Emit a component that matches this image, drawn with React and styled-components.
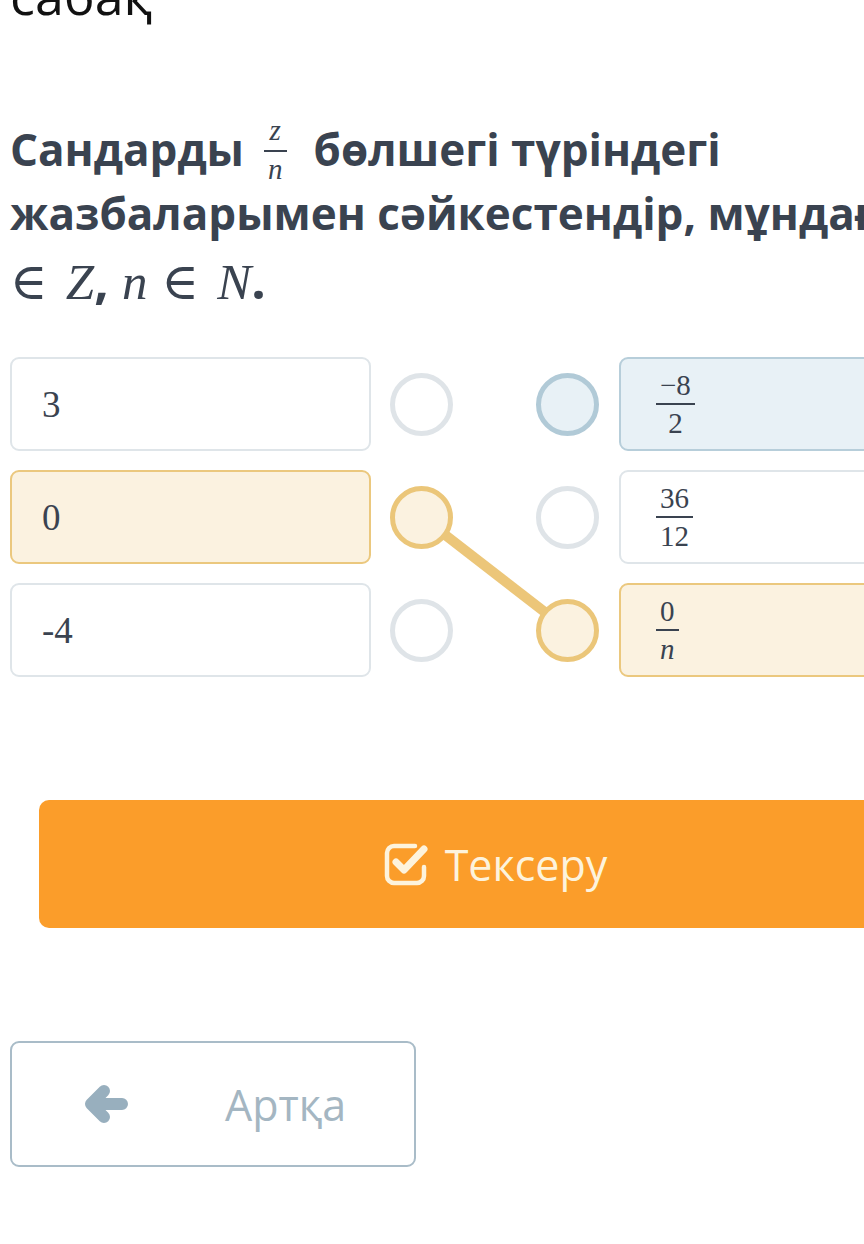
import React from 'react'
import styled, { createGlobalStyle } from 'styled-components'

const GlobalStyle = createGlobalStyle`
  html, body {
    margin: 0;
    padding: 0;
    background: #ffffff;
  }
  body {
    font-family: "Open Sans", "Noto Sans", sans-serif;
    overflow: hidden;
  }
`

const tones = {
  plain: { bg: '#ffffff', border: '#dfe5e9' },
  blue: { bg: '#e8f1f6', border: '#b7ceda' },
  yellow: { bg: '#fbf2e0', border: '#ebc87e' }
}

const Page = styled.div`
  width: 864px;
  height: 1244px;
  overflow: hidden;
`

const Content = styled.div`
  width: 970px;
  padding-left: 10px;
`

const Lesson = styled.div`
  margin-top: -31px;
  font-size: 52px;
  line-height: 52px;
  color: #111111;
  font-weight: 400;
`

const Question = styled.div`
  margin-top: 96px;
  font-size: 44px;
  line-height: 64px;
  font-weight: 700;
  color: #3a4350;
  white-space: nowrap;
`

const MathLine = styled.div`
  font-size: 51px;
  line-height: 63px;
`

const Math = styled.span`
  font-family: "Liberation Serif", "DejaVu Serif", serif;
  font-weight: 400;
  font-style: ${({ italic }) => (italic ? 'italic' : 'normal')};
  margin-right: ${({ space }) => space || 0}px;
`

const Frac = styled.span`
  display: inline-flex;
  flex-direction: column;
  align-items: center;
  vertical-align: ${({ lift }) => lift}px;
  margin: ${({ pull }) => -(pull || 0)}px ${({ right }) => right || 0}px ${({ pull }) => -(pull || 0)}px
    ${({ left }) => left || 0}px;
  font-family: "Liberation Serif", "DejaVu Serif", serif;
  font-weight: 400;
  font-size: ${({ size }) => size}px;
  line-height: ${({ size }) => size}px;
  color: #3a4350;
`

const FracPart = styled.span`
  display: block;
  padding: 0 4px;
  font-style: ${({ italic }) => (italic ? 'italic' : 'normal')};
`

const FracBar = styled.span`
  display: block;
  align-self: stretch;
  height: 2px;
  margin: ${({ top }) => top}px 0 ${({ bottom }) => bottom}px;
  background: #3a4350;
`

const Board = styled.div`
  position: relative;
  margin-top: 43px;
  display: grid;
  grid-template-columns: 361px 19px 63px 83px 63px 20px 361px;
  grid-template-rows: repeat(3, 94px);
  row-gap: 19px;
`

const Card = styled.div`
  grid-column: ${({ col }) => col};
  grid-row: ${({ row }) => row};
  box-sizing: border-box;
  display: flex;
  align-items: center;
  padding-left: ${({ pad }) => pad}px;
  border: 2px solid ${({ tone }) => tones[tone].border};
  background: ${({ tone }) => tones[tone].bg};
  border-radius: 9px;
  font-family: "Liberation Serif", "DejaVu Serif", serif;
  font-size: 37px;
  color: #3a4350;
`

const Dot = styled.div`
  grid-column: ${({ col }) => col};
  grid-row: ${({ row }) => row};
  align-self: center;
  position: relative;
  z-index: 2;
  box-sizing: border-box;
  width: 63px;
  height: 63px;
  border-radius: 50%;
  border: 5px solid ${({ tone }) => (tone === 'plain' ? '#dfe4e8' : tone === 'blue' ? '#b1cad7' : '#ebc679')};
  background: ${({ tone }) => tones[tone].bg};
`

const Link = styled.svg`
  position: absolute;
  left: 0;
  top: 0;
  z-index: 1;
  pointer-events: none;
`

const CheckButton = styled.button`
  margin: 123px 0 0 29px;
  width: 912px;
  height: 128px;
  border: none;
  border-radius: 10px;
  background: #fb9d2a;
  display: flex;
  align-items: center;
  justify-content: center;
  gap: 14px;
  font-family: "Open Sans", sans-serif;
  font-size: 43px;
  color: #fdf3dc;
  padding: 0;
`

const BackButton = styled.button`
  margin-top: 113px;
  width: 406px;
  height: 126px;
  box-sizing: border-box;
  border: 2px solid #a9bcc8;
  border-radius: 9px;
  background: #ffffff;
  display: flex;
  align-items: center;
  padding: 0 0 0 71px;
  gap: 96px;
  font-family: "Open Sans", sans-serif;
  font-size: 43px;
  color: #a4b6c2;
`

const CheckIcon = () => (
  <svg width="48" height="46" viewBox="0 0 48 46" fill="none">
    <path
      d="M32 5 H11 a7 7 0 0 0 -7 7 v23 a7 7 0 0 0 7 7 h23 a7 7 0 0 0 7 -7 v-9"
      stroke="#fdf3dc"
      strokeWidth="4.5"
      strokeLinecap="round"
    />
    <path
      d="M13 21 L21 29 L41 8"
      stroke="#fdf3dc"
      strokeWidth="7"
      strokeLinecap="round"
      strokeLinejoin="round"
    />
  </svg>
)

const ArrowIcon = () => (
  <svg width="46" height="42" viewBox="0 0 46 42" fill="none">
    <path
      d="M39 21 H9 M21 8 L8 21 L21 34"
      stroke="#98afbe"
      strokeWidth="12"
      strokeLinecap="round"
      strokeLinejoin="round"
    />
  </svg>
)

const leftItems = [
  { text: '3', tone: 'plain' },
  { text: '0', tone: 'yellow' },
  { text: '-4', tone: 'plain' }
]

const rightItems = [
  { num: '−8', den: '2', tone: 'blue' },
  { num: '36', den: '12', tone: 'plain' },
  { num: '0', den: 'n', denItalic: true, tone: 'yellow' }
]

const App = () => {
  return (
    <Page>
      <GlobalStyle />
      <Content>
        <Lesson>сабақ</Lesson>
        <Question>
          Сандарды
          <Frac size={29} lift={26} left={20} right={27} pull={20}>
            <FracPart italic>z</FracPart>
            <FracBar top={5} bottom={3} />
            <FracPart italic>n</FracPart>
          </Frac>
          бөлшегі түріндегі
          <br />
          жазбаларымен сәйкестендір, мұндағы <Math italic>z</Math>
          <MathLine>
            <Math space={18}>∈</Math>
            <Math italic>Z</Math>, <Math italic space={14}>n</Math>
            <Math space={18}>∈</Math>
            <Math italic>N</Math>.
          </MathLine>
        </Question>

        <Board>
          <Link width="970" height="320">
            <line x1="412" y1="160" x2="558" y2="273" stroke="#ecc679" strokeWidth="10" />
          </Link>
          {leftItems.map((item, i) => (
            <React.Fragment key={'l' + i}>
              <Card col={1} row={i + 1} tone={item.tone} pad={30}>
                {item.text}
              </Card>
              <Dot col={3} row={i + 1} tone={item.tone} />
            </React.Fragment>
          ))}
          {rightItems.map((item, i) => (
            <React.Fragment key={'r' + i}>
              <Dot col={5} row={i + 1} tone={item.tone} />
              <Card col={7} row={i + 1} tone={item.tone} pad={35}>
                <Frac size={29} lift={0}>
                  <FracPart>{item.num}</FracPart>
                  <FracBar top={3} bottom={4} />
                  <FracPart italic={item.denItalic}>{item.den}</FracPart>
                </Frac>
              </Card>
            </React.Fragment>
          ))}
        </Board>

        <CheckButton>
          <CheckIcon />
          Тексеру
        </CheckButton>

        <BackButton>
          <ArrowIcon />
          Артқа
        </BackButton>
      </Content>
    </Page>
  )
}

export default App
